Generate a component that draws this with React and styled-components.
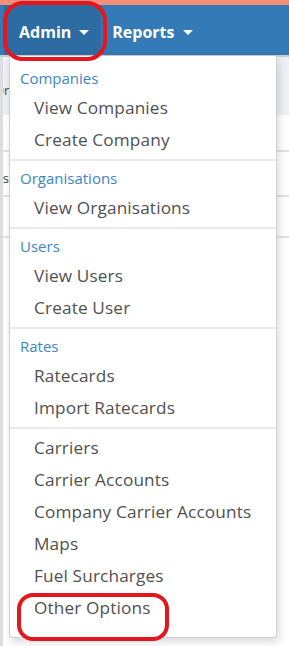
import React from "react";
import styled, { createGlobalStyle } from "styled-components";

const Global = createGlobalStyle`
  html, body { margin: 0; padding: 0; background: #fff; }
  body { font-family: "Open Sans", "Noto Sans", sans-serif; overflow: hidden; }
  #root { width: 289px; height: 646px; overflow: hidden; position: relative; }
`;

const Page = styled.div`
  display: flex;
  flex-direction: column;
  width: 289px;
  height: 646px;
  position: relative;
`;

const TopStrip = styled.div`
  height: 5px;
  background: #f28f78;
`;

const Navbar = styled.nav`
  height: 50px;
  background: #337ab7;
  border-bottom: 2px solid #c9ccd1;
  display: flex;
  align-items: stretch;
  padding-left: 4px;
`;

const NavItem = styled.div`
  display: flex;
  align-items: center;
  gap: 8px;
  padding: 3px ${(p) => (p.$active ? "12px" : "12px")} 0 ${(p) => (p.$active ? "15px" : "11px")};
  background: ${(p) => (p.$active ? "#2d6ca2" : "transparent")};
  color: #fff;
  font-size: 16px;
  font-weight: 700;
`;

const Caret = styled.span`
  width: 0;
  height: 0;
  border-top: 5px solid #fff;
  border-left: 5px solid transparent;
  border-right: 5px solid transparent;
  margin-top: 2px;
`;

const Body = styled.div`
  flex: 1;
  display: flex;
  flex-direction: column;
  border-left: 3px solid #dcdde0;
`;

const TableHead = styled.div`
  height: 58px;
  background: #eef0f3;
  display: flex;
  align-items: flex-start;
  padding-top: 24px;
  box-sizing: border-box;
`;

const Row = styled.div`
  height: ${(p) => p.$h}px;
  border-bottom: 2px solid #e0e2e5;
  box-sizing: border-box;
  display: flex;
  align-items: center;
`;

const ClipStart = styled.div`
  font-size: 13px;
  color: #444;
  white-space: nowrap;
  overflow: hidden;
  text-indent: -9px;
  width: 6px;
`;

const ClipEnd = styled.div`
  font-size: 13px;
  color: #444;
  white-space: nowrap;
  overflow: hidden;
  direction: rtl;
  width: 6px;
  margin-top: 8px;
`;

const Menu = styled.div`
  position: absolute;
  left: 9px;
  top: 56px;
  width: 268px;
  height: 582px;
  box-sizing: border-box;
  background: #fff;
  border: 1px solid #cfd0d3;
  border-top: none;
  border-radius: 0 0 4px 4px;
  box-shadow: 2px 4px 8px rgba(0, 0, 0, 0.15);
  padding-top: 8px;
  display: flex;
  flex-direction: column;
`;

const Header = styled.div`
  height: 28px;
  line-height: 28px;
  padding-left: 10px;
  font-size: 15px;
  color: #3c86c4;
`;

const Item = styled.div`
  height: 32px;
  line-height: 32px;
  padding-left: 24px;
  font-size: 17.2px;
  letter-spacing: 0.15px;
  color: #505050;
  white-space: nowrap;
`;

const Divider = styled.div`
  height: 2px;
  background: #e8e9eb;
  margin: 3px 0;
`;

const Ring = styled.div`
  position: absolute;
  left: ${(p) => p.$x}px;
  top: ${(p) => p.$y}px;
  width: ${(p) => p.$w}px;
  height: ${(p) => p.$h}px;
  box-sizing: border-box;
  border: 4px solid #e5161d;
  border-radius: ${(p) => p.$r}px;
  pointer-events: none;
`;

const groups = [
  { header: "Companies", items: ["View Companies", "Create Company"] },
  { header: "Organisations", items: ["View Organisations"] },
  { header: "Users", items: ["View Users", "Create User"] },
  { header: "Rates", items: ["Ratecards", "Import Ratecards"] },
  {
    header: null,
    items: [
      "Carriers",
      "Carrier Accounts",
      "Company Carrier Accounts",
      "Maps",
      "Fuel Surcharges",
      "Other Options",
    ],
  },
];

export default function App() {
  return (
    <>
      <Global />
      <Page>
        <TopStrip />
        <Navbar>
          <NavItem $active>
            Admin <Caret />
          </NavItem>
          <NavItem>
            Reports <Caret />
          </NavItem>
        </Navbar>
        <Body>
          <TableHead>
            <ClipStart>Organisation</ClipStart>
          </TableHead>
          <Row $h={37} />
          <Row $h={45}>
            <ClipEnd>Companies</ClipEnd>
          </Row>
          <Row $h={41} />
        </Body>
        <Menu>
          {groups.map((g, gi) => (
            <React.Fragment key={gi}>
              {gi > 0 && <Divider />}
              {g.header && <Header>{g.header}</Header>}
              {g.items.map((it) => (
                <Item key={it}>{it}</Item>
              ))}
            </React.Fragment>
          ))}
        </Menu>
        <Ring $x={3} $y={1} $w={104} $h={60} $r={20} />
        <Ring $x={17} $y={593} $w={152} $h={48} $r={16} />
      </Page>
    </>
  );
}
